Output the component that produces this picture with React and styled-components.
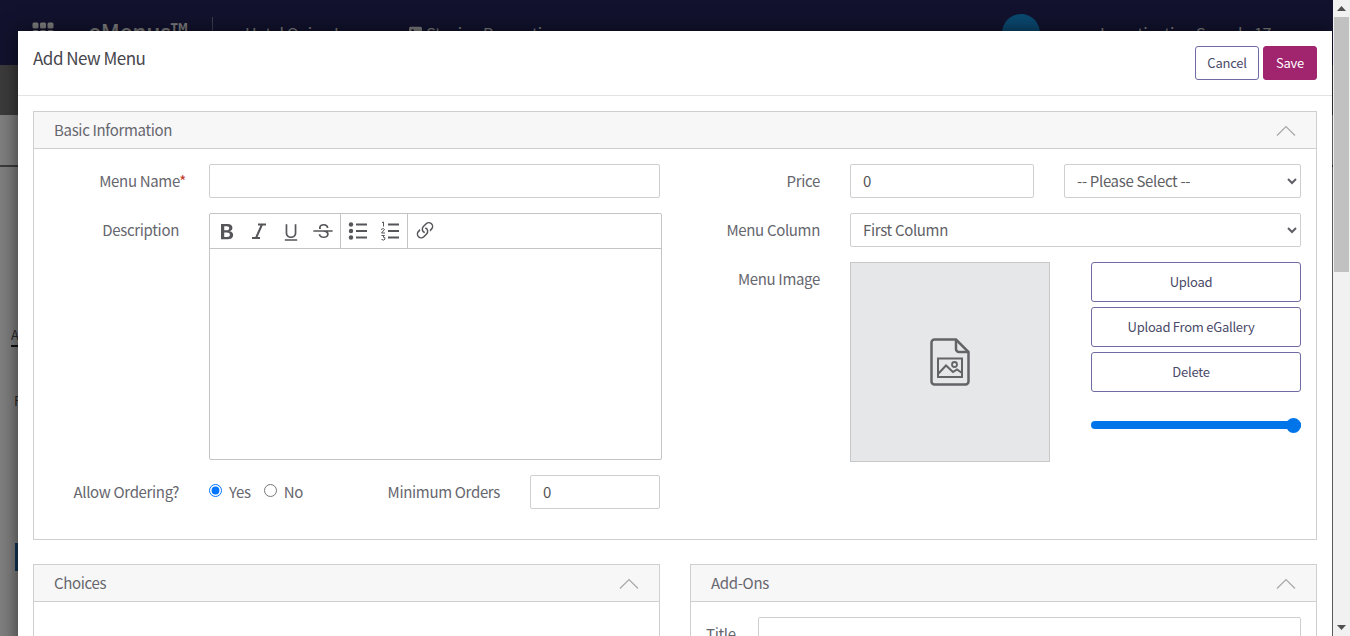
import React from 'react'
import styled, { createGlobalStyle } from 'styled-components'
import {
  BsTypeBold,
  BsTypeUnderline,
  BsTypeStrikethrough,
  BsLink45Deg,
  BsGrid3X3GapFill,
  BsImageFill,
} from 'react-icons/bs'

const Global = createGlobalStyle`
  html, body {
    margin: 0;
    height: 100%;
    overflow: hidden;
  }
  body {
    font-family: "Noto Sans CJK JP", "Noto Sans", sans-serif;
    font-size: 15px;
    letter-spacing: -0.33px;
    line-height: 24px;
    color: #66666e;
  }
  * {
    box-sizing: border-box;
  }
`

const Screen = styled.div`
  display: flex;
  width: 1350px;
  height: 636px;
  overflow: hidden;
`

const Viewport = styled.div`
  position: relative;
  width: 1333px;
  height: 636px;
  overflow: hidden;
`

/* page behind the modal */
const Navbar = styled.div`
  display: flex;
  align-items: center;
  height: 65px;
  padding: 0 0 0 31px;
  background: #24245c;
  color: #fff;
`

const NavLogo = styled.span`
  margin-left: 33px;
  font-size: 23px;
  font-weight: 500;
  width: 124px;
  padding-bottom: 3px;
`

const NavDivider = styled.span`
  width: 1px;
  height: 48px;
  margin-top: 16px;
  background: rgba(255, 255, 255, 0.4);
`

const NavItem = styled.span`
  margin-left: ${({ $gap }) => $gap}px;
  display: flex;
  align-items: center;
  gap: 4px;
  font-size: 16px;
`

const NavAvatar = styled.span`
  align-self: flex-start;
  width: 38px;
  height: 38px;
  margin: 14px 0 0 auto;
  border-radius: 50%;
  background: #1490e0;
`

const NavUser = styled.span`
  margin: 0 53px 0 60px;
  width: 180px;
  font-size: 16px;
  white-space: nowrap;
`

const SubBar = styled.div`
  height: 50px;
  background: #777;
`

const PageStrip = styled.div`
  height: 52px;
  background: #fff;
  border-bottom: 2px solid #777;
`

const PageBody = styled.div`
  display: flex;
  flex-direction: column;
  align-items: flex-start;
  padding: 159px 0 0 11px;
  background: #fff;
  height: 470px;
  color: #555;
  font-size: 13px;
`

const PageTab = styled.span`
  border-bottom: 2px solid #222;
  height: 21px;
  line-height: 18px;
  width: 30px;
`

const PageField = styled.span`
  margin: 45px 0 0 3px;
  line-height: 18px;
`

const PageBadge = styled.span`
  width: 4px;
  height: 28px;
  margin: 133px 0 0 4px;
  background: #1f6fae;
`

const Overlay = styled.div`
  position: absolute;
  inset: 0;
  background: rgba(0, 0, 0, 0.5);
`

/* modal */
const Modal = styled.div`
  position: absolute;
  left: 18px;
  top: 31px;
  width: 1314px;
  height: 620px;
  background: #fff;
  box-shadow: 0 0 18px rgba(0, 0, 0, 0.6);
`

const ModalHeader = styled.div`
  display: flex;
  justify-content: space-between;
  height: 65px;
  padding: 15px;
  border-bottom: 1px solid #e3e3e3;
`

const ModalTitle = styled.h4`
  margin: -1px 0 0;
  font-size: 17px;
  font-weight: 400;
  letter-spacing: -0.5px;
  line-height: 26px;
  color: #46464c;
`

const Actions = styled.div`
  display: flex;
  gap: 4px;
`

const HeaderButton = styled.button`
  height: 34px;
  padding: 0;
  width: ${({ $w }) => $w}px;
  font: inherit;
  font-size: 13px;
  letter-spacing: -0.25px;
  line-height: 20px;
  border-radius: 3px;
  border: 1px solid ${({ $primary }) => ($primary ? '#a0246e' : '#6f6aa3')};
  background: ${({ $primary }) => ($primary ? '#a0246e' : '#fff')};
  color: ${({ $primary }) => ($primary ? '#fff' : '#4a4a68')};
`

const ModalBody = styled.div`
  display: flex;
  flex-direction: column;
  gap: 24px;
  padding: 15px;
`

const Panel = styled.section`
  border: 1px solid #cfcfcf;
`

const PanelHead = styled.div`
  display: flex;
  align-items: center;
  justify-content: space-between;
  height: 37px;
  padding: 0 20px;
  background: #f7f7f7;
  border-bottom: 1px solid #cfcfcf;
  color: #66666e;
`

const Chevron = styled.svg`
  width: 20px;
  height: 11px;
  fill: none;
  stroke: #a8a8a8;
  stroke-width: 1.2;
`

const PanelBody = styled.div`
  display: grid;
  grid-template-columns: 611px 611px;
  column-gap: 30px;
  padding: 15px 15px 30px;
`

const Column = styled.div`
  display: flex;
  flex-direction: column;
  gap: 15px;
`

const Row = styled.div`
  display: grid;
  grid-template-columns: 130px 451px;
  column-gap: 30px;
`

const Label = styled.label`
  text-align: right;
  padding-top: 5px;
  color: #66666e;
  white-space: nowrap;
`

const Required = styled.span`
  margin-right: -7px;
  color: #c0392b;
`

const FieldLine = styled.div`
  display: flex;
  justify-content: space-between;
  align-items: center;
`

const Input = styled.input`
  display: block;
  height: 34px;
  width: ${({ $w }) => ($w ? `${$w}px` : '100%')};
  padding: 0 12px 2px;
  font: inherit;
  letter-spacing: -0.33px;
  color: #555;
  background: #fff;
  border: 1px solid #cfcfcf;
  border-radius: 2px;
  outline: none;
`

const Select = styled.select`
  display: block;
  height: 34px;
  width: ${({ $w }) => ($w ? `${$w}px` : '100%')};
  padding: 0 8px 2px;
  font: inherit;
  letter-spacing: -0.33px;
  color: #5f5f66;
  background: #fff;
  border: 1px solid #cfcfcf;
  border-radius: 2px;
  outline: none;
`

const Editor = styled.div`
  width: 453px;
  height: 247px;
  border: 1px solid #c4c4c4;
  border-radius: 2px;
`

const Toolbar = styled.div`
  display: flex;
  height: 35px;
  border-bottom: 1px solid #c4c4c4;
`

const ToolGroup = styled.div`
  display: flex;
  align-items: center;
  padding: 0 1px;
  border-right: ${({ $last }) => ($last ? 'none' : '1px solid #c4c4c4')};
`

const Tool = styled.span`
  display: flex;
  align-items: center;
  justify-content: center;
  width: 32px;
  height: 34px;
  color: #55555a;
  font-size: ${({ $size }) => $size}px;
`

const Choice = styled.label`
  display: flex;
  align-items: center;
  height: 34px;
  color: #66666e;
`

const Radio = styled.input`
  width: 13px;
  height: 13px;
  margin: 0 7px 4px 0;
`

const OrderRow = styled.div`
  display: flex;
  align-items: center;
  width: 451px;
`

const NoChoice = styled(Choice)`
  margin-left: 13px;
`

const MinLabel = styled.span`
  margin-left: auto;
  margin-right: 30px;
  color: #66666e;
`

const ImageRow = styled.div`
  display: flex;
  justify-content: space-between;
`

const ImageBox = styled.div`
  display: flex;
  align-items: center;
  justify-content: center;
  width: 200px;
  height: 200px;
  background: #e6e7e8;
  border: 1px solid #c8c8c8;
  color: #646468;
`

const ImageTools = styled.div`
  display: flex;
  flex-direction: column;
  gap: 5px;
  width: 210px;
`

const ToolButton = styled.button`
  height: 40px;
  padding: 0 10px 0 0;
  font: inherit;
  font-size: 13px;
  letter-spacing: -0.25px;
  color: #4a4a68;
  background: #fff;
  border: 1px solid #6f6aa3;
  border-radius: 3px;
`

const Slider = styled.input`
  appearance: none;
  display: block;
  width: 210px;
  height: 8px;
  margin: 24px 0 0;
  border-radius: 4px;
  background: #0075ea;
  outline: none;

  &::-webkit-slider-thumb {
    appearance: none;
    width: 15px;
    height: 15px;
    border-radius: 50%;
    background: #0075ea;
  }
`

const Split = styled.div`
  display: grid;
  grid-template-columns: 627px 627px;
  column-gap: 30px;
`

const AddOnBody = styled.div`
  display: grid;
  grid-template-columns: 37px 1fr;
  column-gap: 15px;
  padding: 15px;
`

const AddOnLabel = styled.label`
  padding-top: 5px;
  color: #66666e;
`

/* browser scrollbar */
const Scrollbar = styled.div`
  display: flex;
  flex-direction: column;
  width: 17px;
  height: 636px;
  background: #f1f1f1;
`

const ScrollArrow = styled.div`
  display: flex;
  align-items: center;
  justify-content: center;
  height: 17px;
  color: #505050;
`

const ScrollThumb = styled.div`
  width: 15px;
  height: 255px;
  margin: 0 1px auto;
  background: #c1c1c1;
`

const Arrow = ({ down }) => (
  <svg width="9" height="5" viewBox="0 0 9 5" fill="currentColor">
    <path d={down ? 'M0 0h9L4.500 5z' : 'M0 5h9L4.500 0z'} />
  </svg>
)

const PanelChevron = () => (
  <Chevron viewBox="0 0 20 11">
    <path d="M1 10.500 10 1.500l9 9" />
  </Chevron>
)

const ItalicIcon = () => (
  <svg width="20" height="20" viewBox="0 0 20 20" fill="none" stroke="currentColor" strokeWidth="2">
    <path d="M9 3.500h8M13 3.500 7 17M3 17h8" />
  </svg>
)

const BulletIcon = () => (
  <svg width="20" height="20" viewBox="0 0 20 20" fill="currentColor">
    <circle cx="3" cy="3.500" r="2.200" />
    <circle cx="3" cy="10" r="2.200" />
    <circle cx="3" cy="16.500" r="2.200" />
    <rect x="8" y="2.500" width="11" height="2" />
    <rect x="8" y="9" width="11" height="2" />
    <rect x="8" y="15.500" width="11" height="2" />
  </svg>
)

const NumberIcon = () => (
  <svg width="20" height="20" viewBox="0 0 20 20" fill="none" stroke="currentColor">
    <path strokeWidth="1" d="M2 1.500 3.500 1v4.500M1 8.500q2.500-2 3.500 0L1.500 12h3.500M1.500 14.500h3l-1.500 1.500q2.500 0 2 2t-3.500.5" />
    <path strokeWidth="2" d="M8 3.500h11M8 10h11M8 16.500h11" />
  </svg>
)

const FileImageIcon = () => (
  <svg width="40" height="48" viewBox="0 0 40 48" fill="none" stroke="currentColor" strokeWidth="2.500">
    <path d="M4.500 1.500H26L38.500 14v29.500a3 3 0 0 1-3 3h-31a3 3 0 0 1-3-3v-39a3 3 0 0 1 3-3z" />
    <path d="M26 1.500V11a3 3 0 0 0 3 3h9.500" />
    <rect x="8" y="20.500" width="24" height="18.500" strokeWidth="2" />
    <path strokeWidth="2" d="M8 36l8-8.500 7 6.500 4-2.500 5 3.500" />
    <circle cx="24.500" cy="26.500" r="2.500" strokeWidth="1.800" />
  </svg>
)

const tools = [
  [
    [BsTypeBold, 25],
    [ItalicIcon, 20],
    [BsTypeUnderline, 22],
    [BsTypeStrikethrough, 22],
  ],
  [
    [BulletIcon, 20],
    [NumberIcon, 20],
  ],
  [[BsLink45Deg, 24]],
]

export default function App() {
  return (
    <Screen>
      <Global />
      <Viewport>
        <Navbar>
          <BsGrid3X3GapFill size={24} />
          <NavLogo>eMenus™</NavLogo>
          <NavDivider />
          <NavItem $gap={32}>Hotel Quinn Inn</NavItem>
          <NavItem $gap={52}>
            <BsImageFill size={13} />
            Staging Properties
          </NavItem>
          <NavAvatar />
          <NavUser>Ingestigation Sample 17</NavUser>
        </Navbar>
        <SubBar />
        <PageStrip />
        <PageBody>
          <PageTab>A</PageTab>
          <PageField>F</PageField>
          <PageBadge />
        </PageBody>
        <Overlay />

        <Modal>
          <ModalHeader>
            <ModalTitle>Add New Menu</ModalTitle>
            <Actions>
              <HeaderButton $w={64}>Cancel</HeaderButton>
              <HeaderButton $w={54} $primary>Save</HeaderButton>
            </Actions>
          </ModalHeader>

          <ModalBody>
            <Panel>
              <PanelHead>
                Basic Information
                <PanelChevron />
              </PanelHead>
              <PanelBody>
                <Column>
                  <Row>
                    <Label>Menu Name<Required>*</Required></Label>
                    <Input />
                  </Row>
                  <Row>
                    <Label>Description</Label>
                    <Editor>
                      <Toolbar>
                        {tools.map((group, i) => (
                          <ToolGroup key={i} $last={i === tools.length - 1}>
                            {group.map(([Icon, size], j) => (
                              <Tool key={j} $size={size}><Icon /></Tool>
                            ))}
                          </ToolGroup>
                        ))}
                      </Toolbar>
                    </Editor>
                  </Row>
                  <Row>
                    <Label>Allow Ordering?</Label>
                    <OrderRow>
                      <Choice><Radio type="radio" name="order" defaultChecked />Yes</Choice>
                      <NoChoice><Radio type="radio" name="order" />No</NoChoice>
                      <MinLabel>Minimum Orders</MinLabel>
                      <Input $w={130} defaultValue="0" />
                    </OrderRow>
                  </Row>
                </Column>

                <Column>
                  <Row>
                    <Label>Price</Label>
                    <FieldLine>
                      <Input $w={184} defaultValue="0" />
                      <Select $w={237}><option>-- Please Select --</option></Select>
                    </FieldLine>
                  </Row>
                  <Row>
                    <Label>Menu Column</Label>
                    <Select><option>First Column</option></Select>
                  </Row>
                  <Row>
                    <Label>Menu Image</Label>
                    <ImageRow>
                      <ImageBox><FileImageIcon /></ImageBox>
                      <ImageTools>
                        <ToolButton>Upload</ToolButton>
                        <ToolButton>Upload From eGallery</ToolButton>
                        <ToolButton>Delete</ToolButton>
                        <Slider type="range" min="0" max="100" defaultValue="100" />
                      </ImageTools>
                    </ImageRow>
                  </Row>
                </Column>
              </PanelBody>
            </Panel>

            <Split>
              <Panel>
                <PanelHead>
                  Choices
                  <PanelChevron />
                </PanelHead>
              </Panel>
              <Panel>
                <PanelHead>
                  Add-Ons
                  <PanelChevron />
                </PanelHead>
                <AddOnBody>
                  <AddOnLabel>Title</AddOnLabel>
                  <Input />
                </AddOnBody>
              </Panel>
            </Split>
          </ModalBody>
        </Modal>
      </Viewport>

      <Scrollbar>
        <ScrollArrow><Arrow /></ScrollArrow>
        <ScrollThumb />
        <ScrollArrow><Arrow down /></ScrollArrow>
      </Scrollbar>
    </Screen>
  )
}
